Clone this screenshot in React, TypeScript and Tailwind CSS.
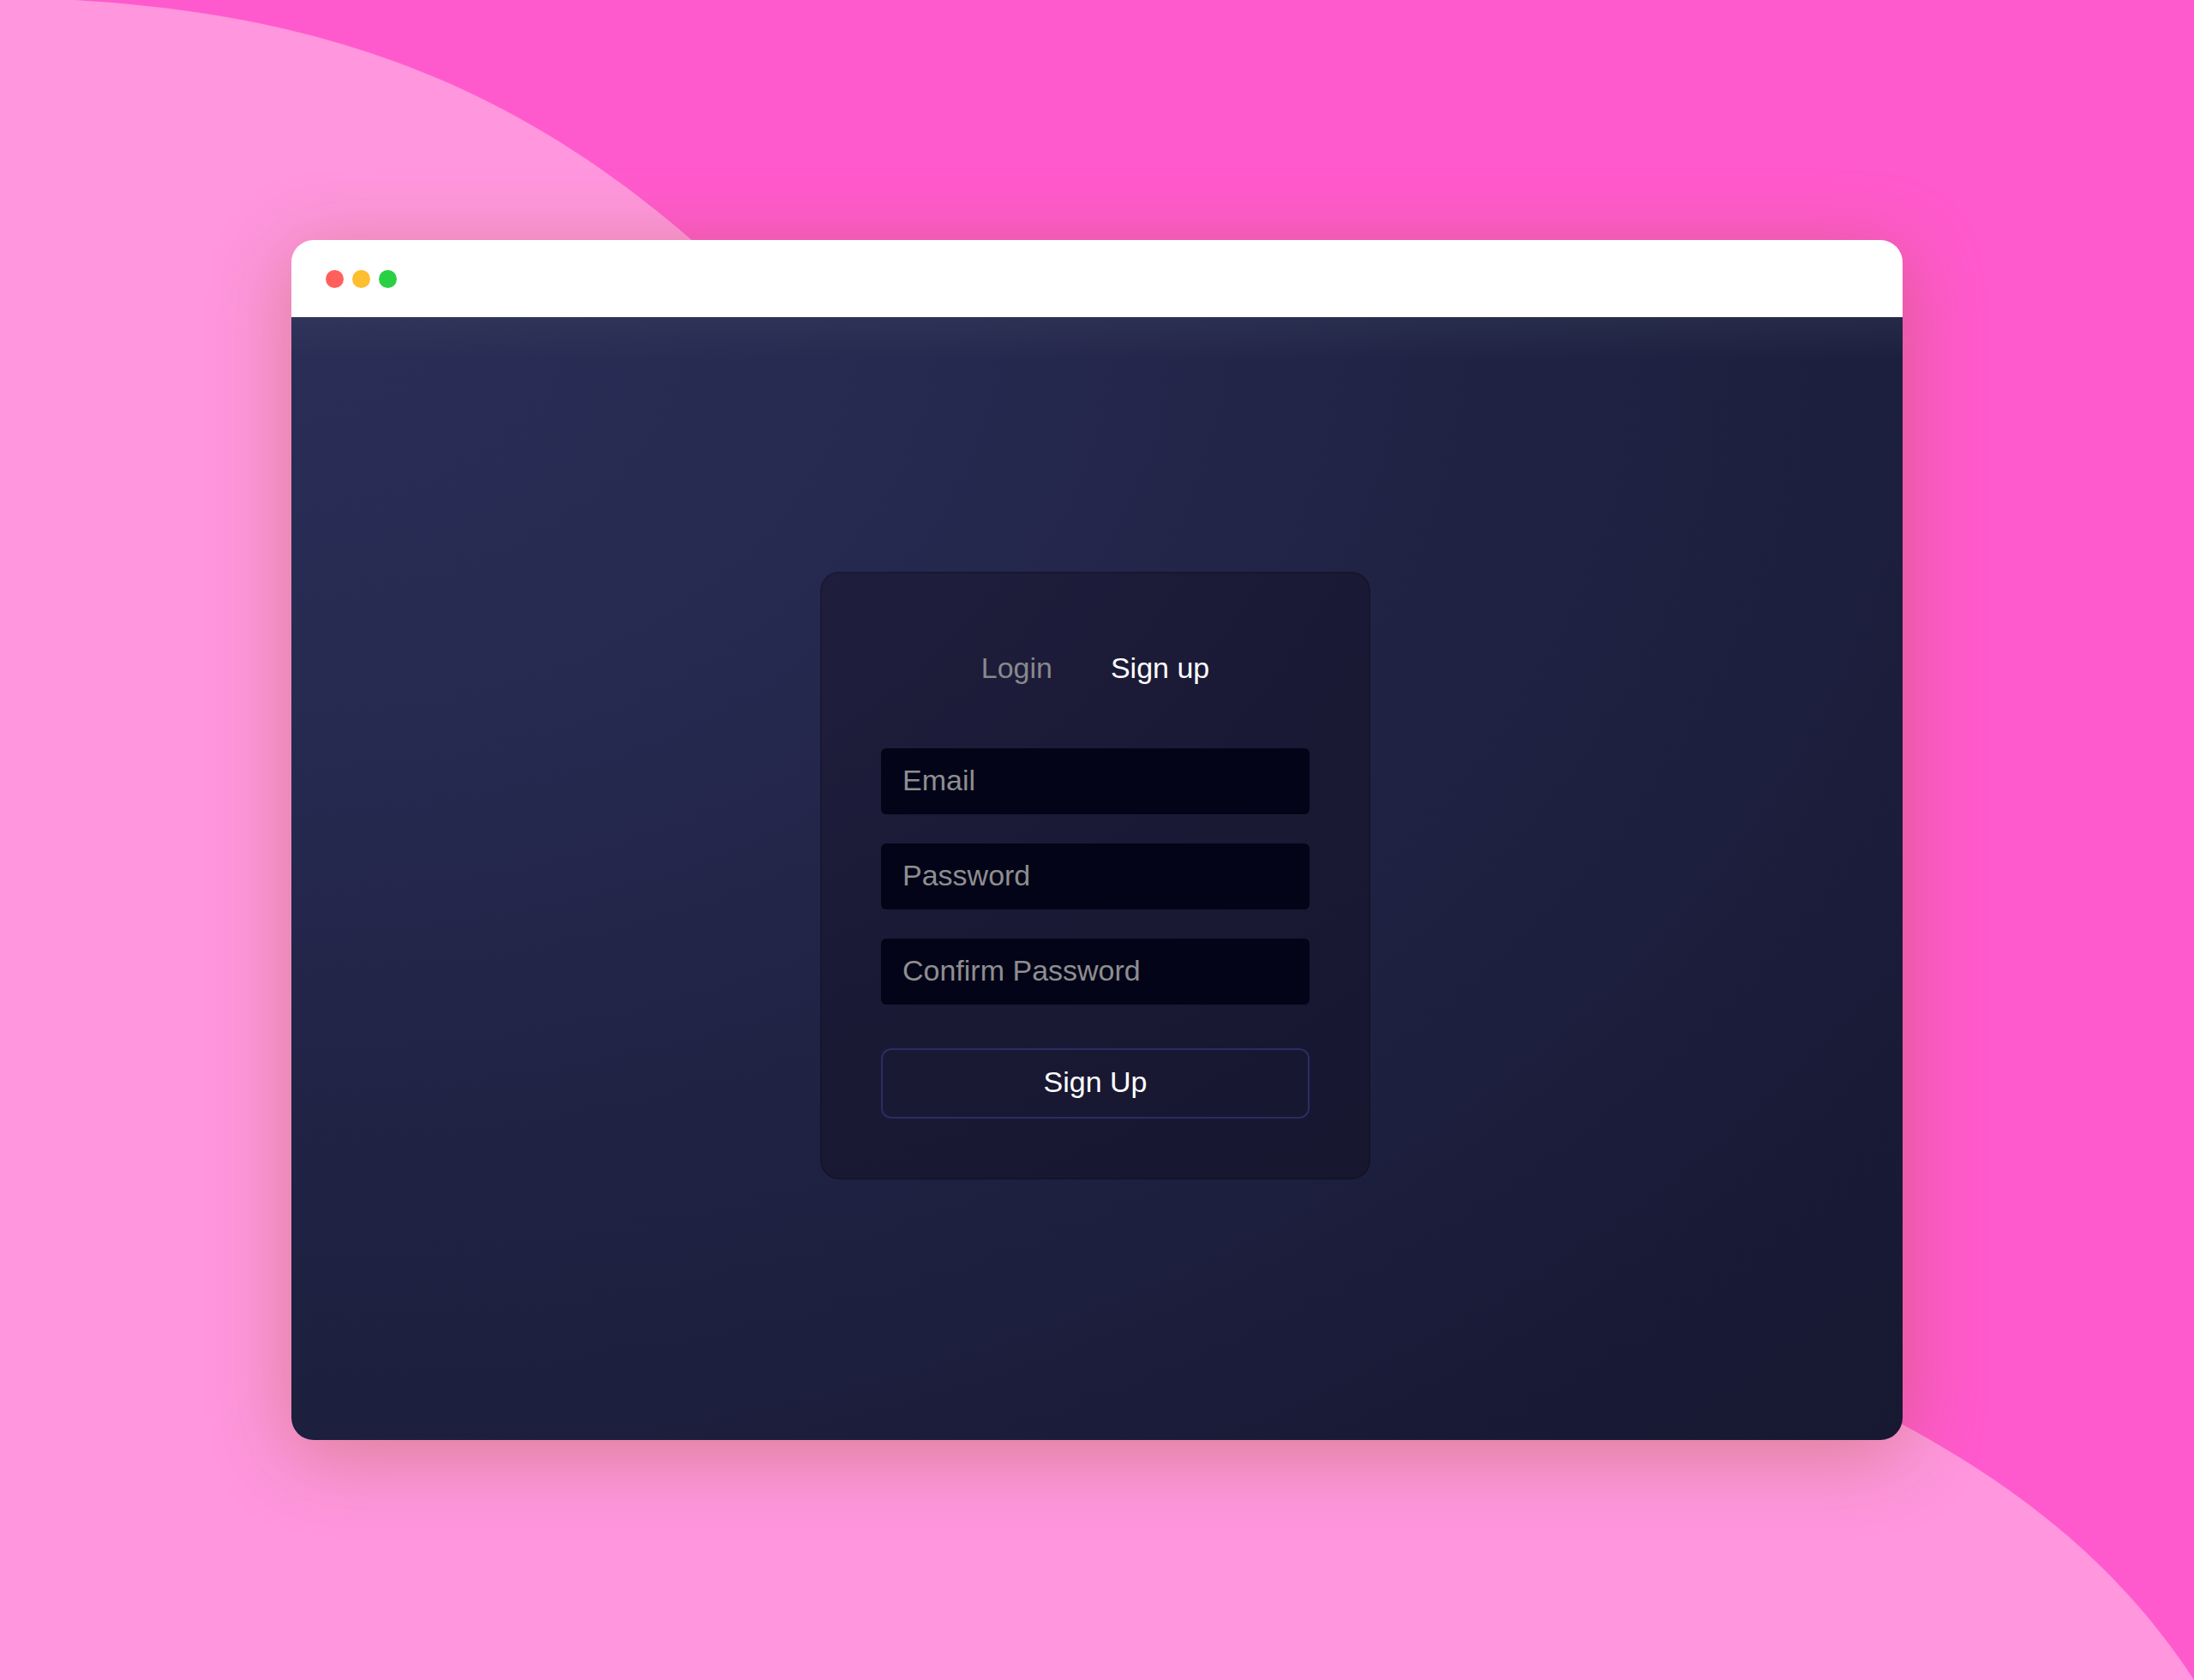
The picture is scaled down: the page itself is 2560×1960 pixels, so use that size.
import { useState } from 'react';

const fields = [
  { id: 'email', label: 'Email', type: 'email' },
  { id: 'password', label: 'Password', type: 'password' },
  { id: 'confirm', label: 'Confirm Password', type: 'password' },
];

const tabs = ['Login', 'Sign up'];

function Backdrop() {
  return (
    <svg
      className="absolute inset-0 h-full w-full"
      viewBox="0 0 2560 1960"
      preserveAspectRatio="none"
      aria-hidden="true"
    >
      <path
        fill="#ff96de"
        d="M0 0H88C348 16 577 80 807 280L1280 1000L2220 1662C2320 1716 2460 1805 2560 1960H0Z"
      />
    </svg>
  );
}

function TitleBar() {
  return (
    <header className="flex h-[90px] items-center gap-2.5 bg-white px-10">
      <span className="size-[21px] rounded-full bg-[#ff605c]" />
      <span className="size-[21px] rounded-full bg-[#fdbe2f]" />
      <span className="size-[21px] rounded-full bg-[#2ad043]" />
    </header>
  );
}

function SignUpCard() {
  const [active, setActive] = useState('Sign up');
  return (
    <form
      className="mb-2 mr-1 flex w-[642px] flex-col rounded-[22px] border-2 border-black/15 bg-[#10081a]/35 px-[69px] pb-[69px] pt-[86px]"
      onSubmit={(e) => e.preventDefault()}
    >
      <nav className="mb-[70px] flex justify-center gap-[68px] leading-[48px]">
        {tabs.map((tab) => (
          <button
            key={tab}
            type="button"
            onClick={() => setActive(tab)}
            className={active === tab ? 'text-white' : 'text-[#88888c]'}
          >
            {tab}
          </button>
        ))}
      </nav>
      <div className="flex flex-col gap-[34px]">
        {fields.map((field) => (
          <input
            key={field.id}
            id={field.id}
            type={field.type}
            aria-label={field.label}
            placeholder={field.label}
            className="h-[77px] w-full rounded-md bg-[#040418] px-[25px] pb-[2px] text-white outline-none placeholder:text-[#8e8e90]"
          />
        ))}
      </div>
      <button
        type="submit"
        className="mt-[51px] h-[82px] rounded-[12px] border-2 border-[#2c2c62] pb-[2px] text-white"
      >
        Sign Up
      </button>
    </form>
  );
}

export default function App() {
  return (
    <div className="relative flex min-h-screen bg-[#ff5acd] px-[340px] py-[280px] font-['Liberation_Sans',Arial,sans-serif] text-[34px]">
      <Backdrop />
      <section className="relative flex flex-1 flex-col overflow-hidden rounded-[26px] shadow-[0_16px_90px_rgba(160,95,30,0.4)]">
        <TitleBar />
        <main className="flex flex-1 items-center justify-center bg-[linear-gradient(180deg,rgba(64,72,100,0.28),transparent_50px),radial-gradient(farthest-corner_at_0_0,#2a2d56_0%,#26294f_30%,#202344_50%,#1c1f3d_70%,#191a36_85%,#171831_100%)]">
          <SignUpCard />
        </main>
      </section>
    </div>
  );
}
